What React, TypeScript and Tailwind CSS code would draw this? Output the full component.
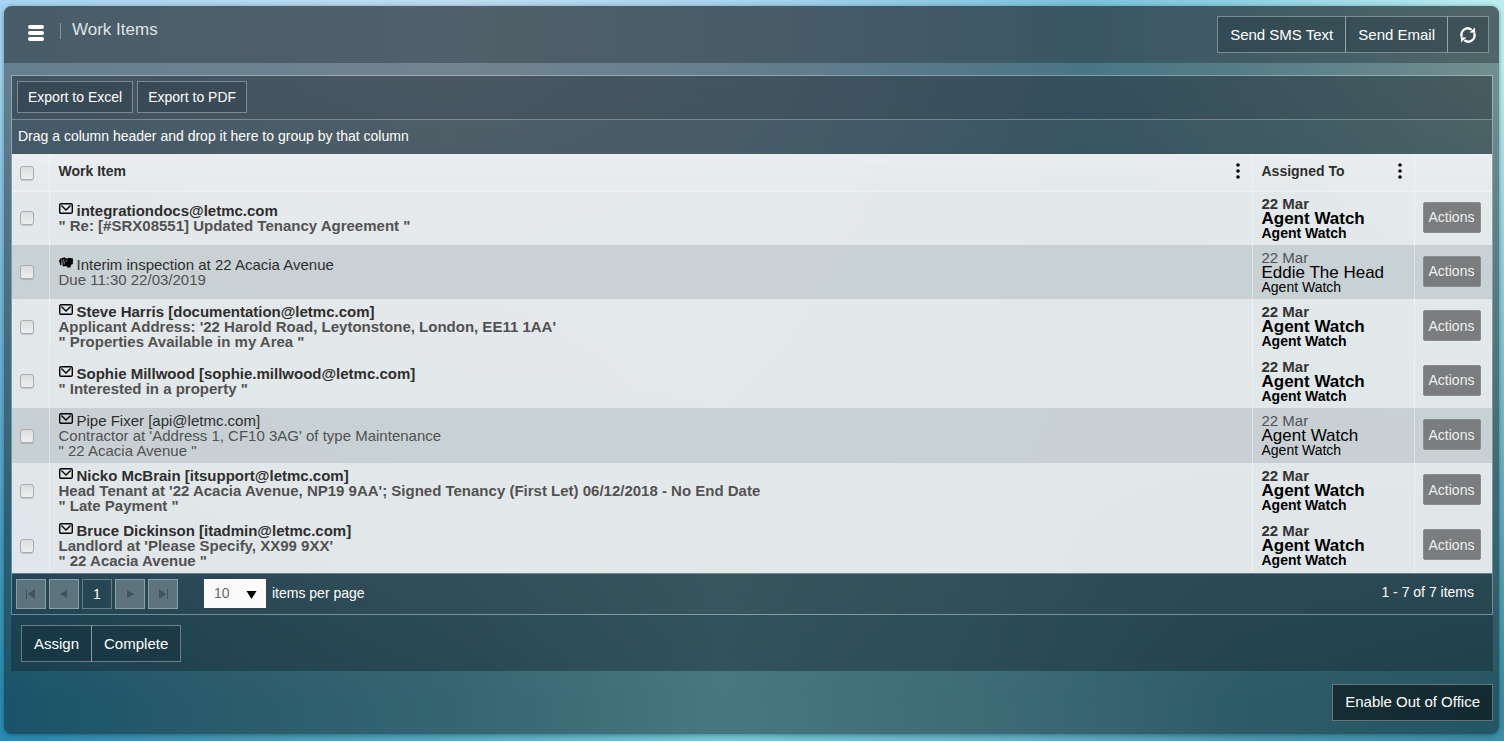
import React, { useState } from 'react';
import clsx from 'clsx';

type WorkItem = {
  id: number;
  icon: 'mail' | 'tag';
  title: string;
  lines: string[];
  date: string;
  assignee: string;
  team: string;
  unread: boolean;
};

const workItems: WorkItem[] = [
  { id: 1, icon: 'mail', title: 'integrationdocs@letmc.com', lines: ['" Re: [#SRX08551] Updated Tenancy Agreement "'], date: '22 Mar', assignee: 'Agent Watch', team: 'Agent Watch', unread: true },
  { id: 2, icon: 'tag', title: 'Interim inspection at 22 Acacia Avenue', lines: ['Due 11:30 22/03/2019'], date: '22 Mar', assignee: 'Eddie The Head', team: 'Agent Watch', unread: false },
  { id: 3, icon: 'mail', title: 'Steve Harris [documentation@letmc.com]', lines: ["Applicant Address: '22 Harold Road, Leytonstone, London, EE11 1AA'", '" Properties Available in my Area "'], date: '22 Mar', assignee: 'Agent Watch', team: 'Agent Watch', unread: true },
  { id: 4, icon: 'mail', title: 'Sophie Millwood [sophie.millwood@letmc.com]', lines: ['" Interested in a property "'], date: '22 Mar', assignee: 'Agent Watch', team: 'Agent Watch', unread: true },
  { id: 5, icon: 'mail', title: 'Pipe Fixer [api@letmc.com]', lines: ["Contractor at 'Address 1, CF10 3AG' of type Maintenance", '" 22 Acacia Avenue "'], date: '22 Mar', assignee: 'Agent Watch', team: 'Agent Watch', unread: false },
  { id: 6, icon: 'mail', title: 'Nicko McBrain [itsupport@letmc.com]', lines: ["Head Tenant at '22 Acacia Avenue, NP19 9AA'; Signed Tenancy (First Let) 06/12/2018 - No End Date", '" Late Payment "'], date: '22 Mar', assignee: 'Agent Watch', team: 'Agent Watch', unread: true },
  { id: 7, icon: 'mail', title: 'Bruce Dickinson [itadmin@letmc.com]', lines: ["Landlord at 'Please Specify, XX99 9XX'", '" 22 Acacia Avenue "'], date: '22 Mar', assignee: 'Agent Watch', team: 'Agent Watch', unread: true },
];

const MailIcon = () => (
  <svg className="w-[14px] h-[11px] shrink-0" viewBox="0 0 14 11" fill="none" stroke="black" strokeWidth="1.4">
    <rect x="0.7" y="0.7" width="12.6" height="9.6" rx="1.4" />
    <path d="M2.4 2.4 L7 7 L11.6 2.4" />
  </svg>
);

const TagIcon = () => (
  <svg className="w-[14px] h-[11px] shrink-0" viewBox="0 0 14 11" fill="black">
    <path d="M0 3.4 L2 1 L2.8 1.2 L2.4 8.6 L1.2 8 Z" />
    <path d="M3 1 L5.6 0.2 L6.6 1.2 L8.8 1.6 L9.6 0.8 L14 1.4 L13.8 7 L12 8 L11.4 10.4 L8.4 10.6 L7.4 9 L3.8 9.6 Z" />
    <path d="M4.6 2.4 L5.4 7.4 M7.2 2.8 L7.4 4.6" stroke="#c8cfd3" strokeWidth="0.7" />
  </svg>
);

const RefreshIcon = () => (
  <svg className="w-4 h-4" viewBox="0 0 16 16" fill="none" stroke="white" strokeWidth="2.3">
    <path d="M1.9 10 A6.2 6.2 0 0 1 11.6 2.9" />
    <path d="M14.1 6 A6.2 6.2 0 0 1 4.4 13.1" />
    <path d="M9.6 5.6 L15.2 5.8 L15 0.6 Z" fill="white" stroke="none" />
    <path d="M6.4 10.4 L0.8 10.2 L1 15.4 Z" fill="white" stroke="none" />
  </svg>
);

const ColumnMenu = ({ label }: { label: string }) => (
  <button aria-label={label} className="flex items-center justify-center w-4 h-5 cursor-pointer">
    <svg className="w-1 h-4" viewBox="0 0 4 16">
      <circle cx="2" cy="2" r="1.8" />
      <circle cx="2" cy="8" r="1.8" />
      <circle cx="2" cy="14" r="1.8" />
    </svg>
  </button>
);

const TickBox = ({ label, checked, onChange }: { label: string; checked: boolean; onChange: () => void }) => (
  <input
    type="checkbox"
    aria-label={label}
    checked={checked}
    onChange={onChange}
    className="block appearance-none w-[14px] h-[14px] rounded-[3px] border border-[#a9adb0] bg-linear-to-b from-[#dcdede] to-[#eeefef] shadow-[0_1px_1px_rgba(0,0,0,0.15)] checked:bg-slate-500 cursor-pointer"
  />
);

const barButton = 'h-[37px] px-3 pt-0.5 pb-px border border-white/35 bg-[#0c1c26]/25 text-white text-[15px] cursor-pointer hover:bg-black/40';
const exportButton = 'h-8 px-[10px] border border-white/35 bg-[#1c2a36]/25 text-white text-sm cursor-pointer hover:bg-black/30';
const pagerButton = 'flex items-center justify-center w-[30px] h-[30px] border border-[#8a9ea6] bg-[#5d737d]';

export default function App() {
  const [selected, setSelected] = useState<number[]>([]);

  const toggle = (id: number) =>
    setSelected(prev => (prev.includes(id) ? prev.filter(x => x !== id) : [...prev, id]));

  const toggleAll = () =>
    setSelected(selected.length === workItems.length ? [] : workItems.map(w => w.id));

  return (
    <div className="relative isolate min-h-screen pt-[6px] pl-1 pb-[7px] pr-[5px] flex flex-col font-['Liberation_Sans',Arial,sans-serif] bg-[linear-gradient(to_right,#2a8bb0_0%,#4798b2_15%,#58a9bd_30%,#78c8d4_48%,#66b2c4_66%,#4e98ae_82%,#3c8fa5_100%)]">
      {/* Light sky that fades down the page */}
      <div className="absolute inset-0 -z-10 bg-[linear-gradient(to_right,#a6d4f0_0%,#bfdcf0_30%,#a3d2ec_52%,#7cc2de_72%,#8ed0e2_82%,#bdeff0_100%)] [mask-image:linear-gradient(to_bottom,black_10%,transparent_95%)]" />

      <main className="flex-1 flex flex-col rounded-lg bg-black/40 shadow-[0_1px_5px_rgba(0,40,60,0.45)]">
        {/* Title bar */}
        <header className="h-[57px] shrink-0 flex items-start justify-between rounded-t-lg bg-[#27323a]/45 pl-6 pr-[10px] pt-[10px]">
          <div className="flex items-center">
            <button aria-label="Menu" className="mt-2 flex flex-col gap-[2px] w-4 cursor-pointer">
              <span className="h-1 rounded-xs bg-white" />
              <span className="h-1 rounded-xs bg-white" />
              <span className="h-1 rounded-xs bg-white" />
            </button>
            <span className="ml-4 mt-1 w-px h-4 bg-white/35" />
            <h1 className="ml-[11px] pt-0.5 text-[17px] leading-6 text-[#dfe3e5]">Work Items</h1>
          </div>
          <div className="flex -space-x-px">
            <button className={barButton}>Send SMS Text</button>
            <button className={barButton}>Send Email</button>
            <button aria-label="Refresh" className={barButton}>
              <RefreshIcon />
            </button>
          </div>
        </header>

        <section className="mt-3 ml-[7px] mr-[6px] border border-white/30">
          {/* Export toolbar */}
          <div className="flex gap-1 p-[5px] pb-[6px] bg-[#202a32]/50 border-b border-white/30">
            <button className={exportButton}>Export to Excel</button>
            <button className={exportButton}>Export to PDF</button>
          </div>
          <div className="h-[34px] flex items-center px-[6px] pb-0.5 bg-[#27323a]/45 text-sm text-white">
            Drag a column header and drop it here to group by that column
          </div>

          <table className="w-full table-fixed border-collapse bg-[#f0f2f3]/92 text-[15px] leading-[15px] text-[#2e2e2e]">
            <colgroup>
              <col className="w-[37px]" />
              <col />
              <col className="w-[162px]" />
              <col className="w-[78px]" />
            </colgroup>
            <thead>
              <tr className="h-[37px] text-sm text-left bg-linear-to-b from-white/20 to-white/5 border-b border-white/40">
                <th className="pl-2 pt-0.5">
                  <TickBox label="Select all" checked={selected.length === workItems.length} onChange={toggleAll} />
                </th>
                <th className="pl-[9px] pr-[6px] pb-0.5 border-l border-white/40">
                  <div className="flex items-center justify-between">
                    Work Item
                    <ColumnMenu label="Work Item column menu" />
                  </div>
                </th>
                <th className="pl-[9px] pr-[6px] pb-0.5 border-l border-white/40">
                  <div className="flex items-center justify-between">
                    Assigned To
                    <ColumnMenu label="Assigned To column menu" />
                  </div>
                </th>
                <td className="border-l border-white/40" />
              </tr>
            </thead>
            <tbody>
              {workItems.map(item => (
                <tr key={item.id} className={clsx('h-[54px]', item.unread ? 'font-bold' : 'bg-[#8c9ba3]/30')}>
                  <td className="pl-2">
                    <TickBox label={`Select ${item.title}`} checked={selected.includes(item.id)} onChange={() => toggle(item.id)} />
                  </td>
                  <td className="py-[5px] pl-[9px] border-l border-white/40">
                    <div className="flex items-start gap-1">
                      {item.icon === 'mail' ? <MailIcon /> : <TagIcon />}
                      <span>{item.title}</span>
                    </div>
                    {item.lines.map(line => (
                      <div key={line} className="text-[#525252]">{line}</div>
                    ))}
                  </td>
                  <td className="py-1 pl-[9px] border-l border-white/40">
                    <div className={item.unread ? 'text-[#333333]' : 'text-[#525252]'}>{item.date}</div>
                    <div className="text-[17px] leading-[15px] text-black">{item.assignee}</div>
                    <div className="text-sm leading-[15px] text-black">{item.team}</div>
                  </td>
                  <td className="pl-2 pb-0.5 border-l border-white/40">
                    <button className="block w-[58px] h-[31px] rounded-xs border border-[#8a8d8e] bg-[#7a7c7d] text-sm font-normal text-[#f0f0f0] cursor-pointer hover:bg-[#696b6c]">
                      Actions
                    </button>
                  </td>
                </tr>
              ))}
            </tbody>
          </table>

          {/* Pager */}
          <div className="h-[41px] flex items-center gap-[3px] pl-1 pr-[18px] border-t border-white/30 bg-[#1e2a32]/45 text-sm text-white">
            <button aria-label="First page" disabled className={pagerButton}>
              <svg className="w-3 h-3" viewBox="0 0 12 12" fill="#3d5560"><path d="M1 1h1v10H1zM10 1v10L3 6z" /></svg>
            </button>
            <button aria-label="Previous page" disabled className={pagerButton}>
              <svg className="w-3 h-3" viewBox="0 0 12 12" fill="#3d5560"><path d="M9 2v8L2 6z" /></svg>
            </button>
            <button className="w-[30px] h-[30px] border border-white/30 cursor-pointer">1</button>
            <button aria-label="Next page" disabled className={pagerButton}>
              <svg className="w-3 h-3" viewBox="0 0 12 12" fill="#3d5560"><path d="M3 2v8l7-4z" /></svg>
            </button>
            <button aria-label="Last page" disabled className={pagerButton}>
              <svg className="w-3 h-3" viewBox="0 0 12 12" fill="#3d5560"><path d="M2 1v10l7-5zM10 1h1v10h-1z" /></svg>
            </button>
            <label className="ml-[23px] pb-0.5 flex items-center gap-[6px]">
              <span className="relative">
                <select defaultValue="10" className="block appearance-none w-[62px] h-[29px] pl-[10px] bg-[#fafafa] text-sm text-[#666666] cursor-pointer">
                  <option>10</option>
                  <option>20</option>
                  <option>50</option>
                </select>
                <svg className="absolute right-[9px] top-3 w-[11px] h-2 pointer-events-none" viewBox="0 0 11 8"><path d="M0.5 0h10L5.5 8z" /></svg>
              </span>
              items per page
            </label>
            <span className="ml-auto pb-1">1 - 7 of 7 items</span>
          </div>
        </section>

        <div className="ml-[7px] mr-[6px] flex -space-x-px px-[10px] pt-[10px] pb-[9px] bg-[#16262f]/45">
          <button className={barButton}>Assign</button>
          <button className={barButton}>Complete</button>
        </div>

        <div className="mt-[13px] mr-[6px] flex justify-end">
          <button className="h-[37px] px-3 border border-white/35 bg-black/50 text-white text-[15px] cursor-pointer hover:bg-black/60">
            Enable Out of Office
          </button>
        </div>
      </main>
    </div>
  );
}
